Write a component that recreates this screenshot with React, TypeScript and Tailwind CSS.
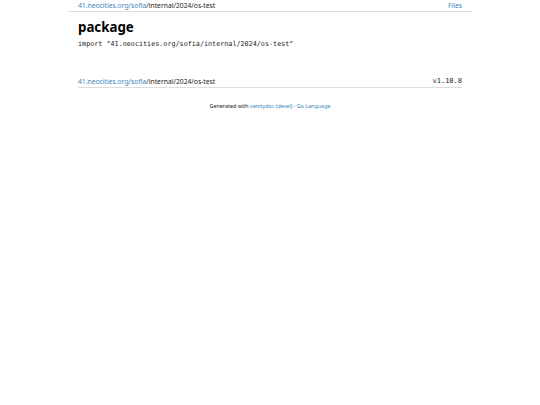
export default function App() {
  const font = { fontFamily: '"Noto Sans", sans-serif' };
  return (
    <div className="min-h-[405px] bg-white text-[#222]" style={font}>
      <div className="mx-auto w-[404px]">
        {/* header */}
        <div className="flex items-center justify-between h-[12px] pt-[1px] px-[10px] border-b border-[#dddddd] text-[6.75px] leading-[10px]">
          <div>
            <a className="text-[#3a87bd]">41.neocities.org/sofia</a>/internal/2024/os-test
          </div>
          <a className="text-[#3a87bd]">Files</a>
        </div>

        <div className="px-[10px]">
          <h1 className="mt-[6px] text-[13.3px] leading-[18px] font-bold text-black">package</h1>
          <pre className="mt-[3px] text-[6.75px] leading-[10px] font-['DejaVu_Sans_Mono',monospace]">
            import "41.neocities.org/sofia/internal/2024/os-test"
          </pre>

          <div className="mt-[28px] flex items-end justify-between border-b border-[#dddddd] pb-[1px] text-[6.75px] leading-[9px]">
            <div>
              <a className="text-[#3a87bd]">41.neocities.org/sofia</a>/internal/2024/os-test
            </div>
            <span className="font-['DejaVu_Sans_Mono',monospace] text-[7px]">v1.10.8</span>
          </div>

          <p className="mt-[14px] text-center text-[5.4px] leading-[8px]">
            Generated with <a className="text-[#3a87bd]">vanitydoc (devel)</a> ·{" "}
            <a className="text-[#3a87bd]">Go Language</a>
          </p>
        </div>
      </div>
    </div>
  );
}
